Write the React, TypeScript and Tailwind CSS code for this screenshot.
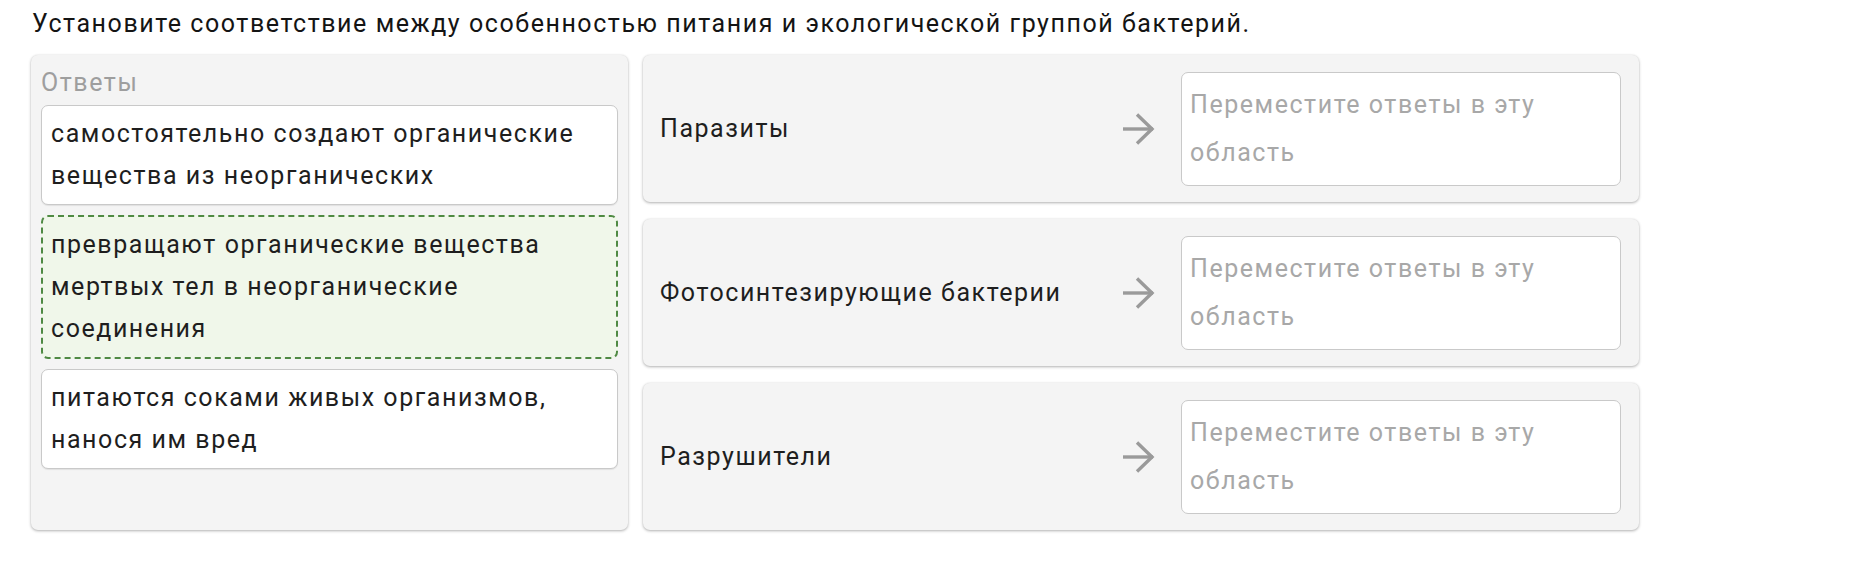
import React from "react";

const answers = [
  { text: "самостоятельно создают органические вещества из неорганических", active: false },
  { text: "превращают органические вещества мертвых тел в неорганические соединения", active: true },
  { text: "питаются соками живых организмов, нанося им вред", active: false },
];

const targets = ["Паразиты", "Фотосинтезирующие бактерии", "Разрушители"];

function Arrow() {
  return (
    <svg width="34" height="34" viewBox="0 0 34 34" fill="none" className="shrink-0">
      <path d="M1 17 H31" stroke="#9a9a9a" strokeWidth="3.4" />
      <path d="M15 2.5 L30 17 L15 31.5" stroke="#9a9a9a" strokeWidth="3.4" strokeLinejoin="miter" />
    </svg>
  );
}

export default function App() {
  return (
    <div
      className="w-[1874px] h-[575px] bg-white px-[31px] pt-[6px] text-[25px] tracking-[1.55px] text-[#1e1e1e]"
      style={{ fontFamily: "Roboto, 'Noto Sans', sans-serif" }}
    >
      <div className="leading-[36px] ml-[1px] text-[#141414]">
        Установите соответствие между особенностью питания и экологической группой бактерий.
      </div>
      <div className="mt-[13px] flex gap-[15px] items-stretch">
        <div className="w-[597px] shrink-0 rounded-[7px] bg-[#f4f4f4] shadow-[0_1px_3px_rgba(0,0,0,0.3),0_0_2px_rgba(0,0,0,0.06)] px-[10px] pt-[10px] pb-[10px]">
          <div className="leading-[36px] text-[#9e9e9e] mb-[4px]">Ответы</div>
          <div className="flex flex-col gap-[10px]">
            {answers.map((a, i) => (
              <div
                key={i}
                className={
                  a.active
                    ? "rounded-[7px] border-2 border-dashed border-[#4f8a43] bg-[#f0f7ea] px-[8px] py-[7px] leading-[42px]"
                    : "rounded-[7px] border-[1.5px] border-[#c9c9c9] bg-white px-[9px] py-[7px] leading-[42px] shadow-[0_1px_1px_rgba(0,0,0,0.08)]"
                }
              >
                {a.text}
              </div>
            ))}
          </div>
        </div>
        <div className="w-[996px] shrink-0 flex flex-col gap-[17px]">
          {targets.map((t) => (
            <div
              key={t}
              className="h-[147px] rounded-[7px] bg-[#f4f4f4] shadow-[0_1px_3px_rgba(0,0,0,0.3),0_0_2px_rgba(0,0,0,0.06)] flex items-center pl-[17px] pr-[18px]"
            >
              <div className="flex-1">{t}</div>
              <div className="mr-[25px]">
                <Arrow />
              </div>
              <div className="w-[440px] h-[114px] rounded-[7px] border-[1.5px] border-[#c9c9c9] bg-white px-[8px] py-[8px] leading-[48px] text-[#a8a8a8]">
                Переместите ответы в эту область
              </div>
            </div>
          ))}
        </div>
      </div>
    </div>
  );
}
